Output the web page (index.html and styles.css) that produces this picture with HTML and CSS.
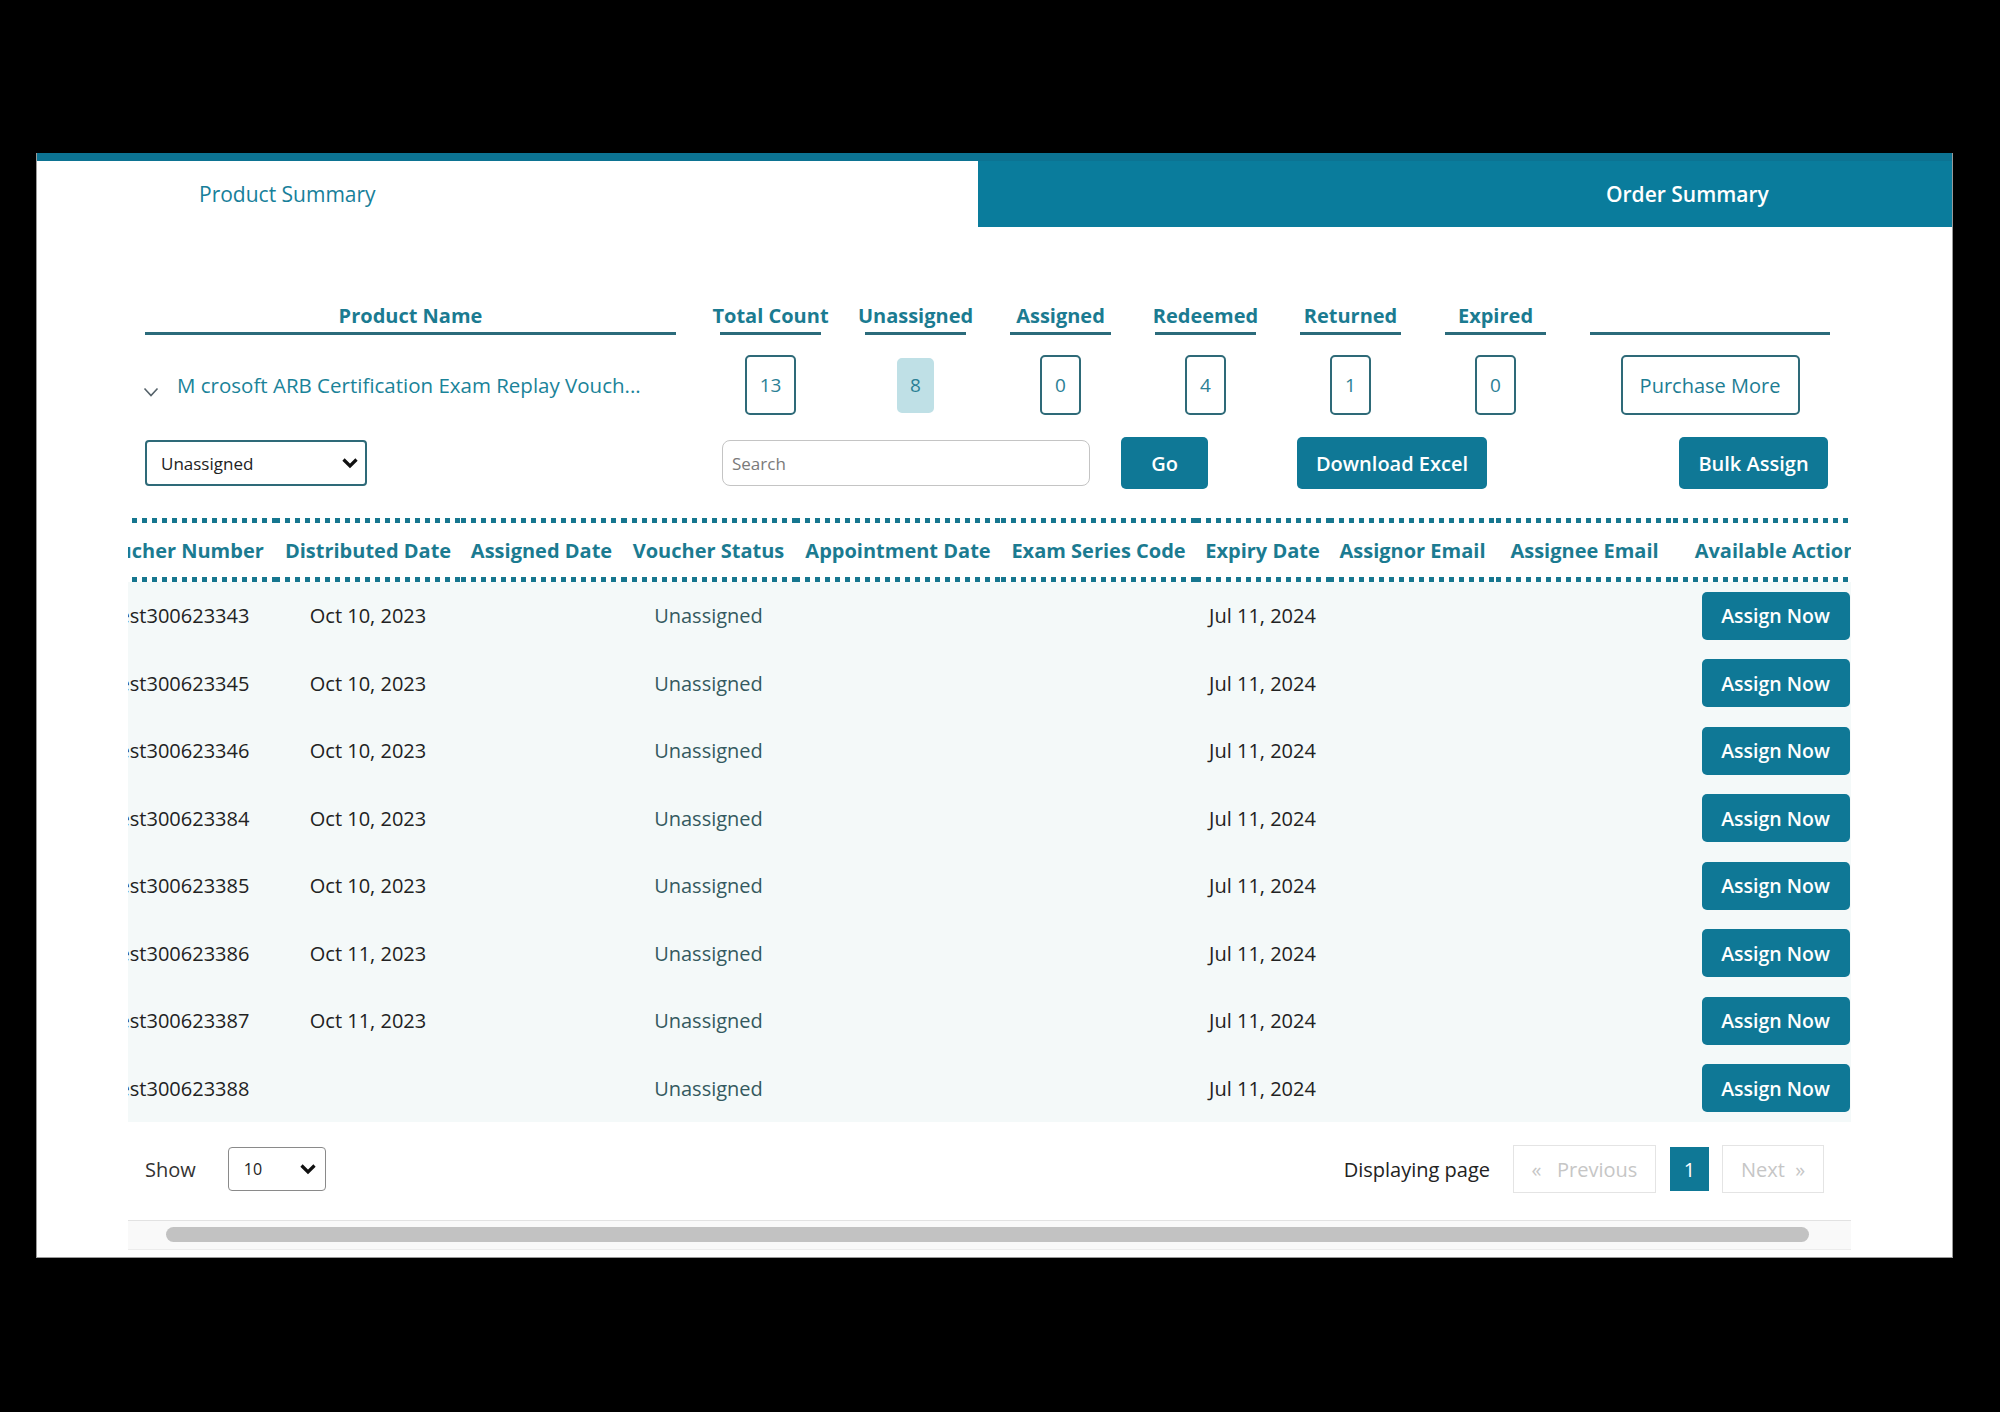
FILE: index.html
```html
<!DOCTYPE html>
<html lang="en">
<head>
<meta charset="UTF-8">
<meta name="viewport" content="width=device-width, initial-scale=1.0">
<title>Voucher Summary</title>
<link rel="stylesheet" href="styles.css">
</head>
<body>

<div class="screen">
<div class="card">

    <div class="tabs">
        <div class="tab tab-product">Product Summary</div>
        <div class="tab tab-order">Order Summary</div>
    </div>

    <div class="summary">
        <div class="summary-grid">
            <div class="sum-head">Product Name</div>
            <div class="sum-head">Total Count</div>
            <div class="sum-head">Unassigned</div>
            <div class="sum-head">Assigned</div>
            <div class="sum-head">Redeemed</div>
            <div class="sum-head">Returned</div>
            <div class="sum-head">Expired</div>
            <div class="sum-head"></div>

            <div class="product-cell">
                <svg class="expand" width="16" height="10" viewBox="0 0 16 10"><path d="M1.5 1.5 L8 8.5 L14.5 1.5" fill="none" stroke="#55626a" stroke-width="1.6"/></svg>
                <span class="product-name">M crosoft ARB Certification Exam Replay Vouch...</span>
            </div>
            <div class="count-cell"><span class="count">13</span></div>
            <div class="count-cell"><span class="count count-active">8</span></div>
            <div class="count-cell"><span class="count">0</span></div>
            <div class="count-cell"><span class="count">4</span></div>
            <div class="count-cell"><span class="count">1</span></div>
            <div class="count-cell"><span class="count">0</span></div>
            <div class="count-cell"><button class="btn-outline">Purchase More</button></div>
        </div>

        <div class="controls">
            <div class="select status-select">
                <span>Unassigned</span>
                <svg width="18" height="12" viewBox="0 0 18 12"><path d="M2.5 2.5 L9 9 L15.5 2.5" fill="none" stroke="#111" stroke-width="3.2"/></svg>
            </div>
            <input type="text" class="search" placeholder="Search">
            <button class="btn btn-go">Go</button>
            <button class="btn btn-excel">Download Excel</button>
            <button class="btn btn-bulk">Bulk Assign</button>
        </div>
    </div>

    <div class="voucher-table">
        <div class="table-clip">
            <table>
                <colgroup>
                    <col style="width:193px">
                    <col style="width:186px">
                    <col style="width:161px">
                    <col style="width:173px">
                    <col style="width:206px">
                    <col style="width:195px">
                    <col style="width:133px">
                    <col style="width:167px">
                    <col style="width:177px">
                    <col style="width:205px">
                </colgroup>
                <thead>
                    <tr>
                        <th>Voucher Number</th>
                        <th>Distributed Date</th>
                        <th>Assigned Date</th>
                        <th>Voucher Status</th>
                        <th>Appointment Date</th>
                        <th>Exam Series Code</th>
                        <th>Expiry Date</th>
                        <th>Assignor Email</th>
                        <th>Assignee Email</th>
                        <th>Available Action</th>
                    </tr>
                </thead>
                <tbody>
                    <tr><td>Test300623343</td><td>Oct 10, 2023</td><td></td><td class="status">Unassigned</td><td></td><td></td><td>Jul 11, 2024</td><td></td><td></td><td><button class="btn btn-assign">Assign Now</button></td></tr>
                    <tr><td>Test300623345</td><td>Oct 10, 2023</td><td></td><td class="status">Unassigned</td><td></td><td></td><td>Jul 11, 2024</td><td></td><td></td><td><button class="btn btn-assign">Assign Now</button></td></tr>
                    <tr><td>Test300623346</td><td>Oct 10, 2023</td><td></td><td class="status">Unassigned</td><td></td><td></td><td>Jul 11, 2024</td><td></td><td></td><td><button class="btn btn-assign">Assign Now</button></td></tr>
                    <tr><td>Test300623384</td><td>Oct 10, 2023</td><td></td><td class="status">Unassigned</td><td></td><td></td><td>Jul 11, 2024</td><td></td><td></td><td><button class="btn btn-assign">Assign Now</button></td></tr>
                    <tr><td>Test300623385</td><td>Oct 10, 2023</td><td></td><td class="status">Unassigned</td><td></td><td></td><td>Jul 11, 2024</td><td></td><td></td><td><button class="btn btn-assign">Assign Now</button></td></tr>
                    <tr><td>Test300623386</td><td>Oct 11, 2023</td><td></td><td class="status">Unassigned</td><td></td><td></td><td>Jul 11, 2024</td><td></td><td></td><td><button class="btn btn-assign">Assign Now</button></td></tr>
                    <tr><td>Test300623387</td><td>Oct 11, 2023</td><td></td><td class="status">Unassigned</td><td></td><td></td><td>Jul 11, 2024</td><td></td><td></td><td><button class="btn btn-assign">Assign Now</button></td></tr>
                    <tr><td>Test300623388</td><td></td><td></td><td class="status">Unassigned</td><td></td><td></td><td>Jul 11, 2024</td><td></td><td></td><td><button class="btn btn-assign">Assign Now</button></td></tr>
                </tbody>
            </table>
        </div>

        <div class="table-footer">
            <span class="show-label">Show</span>
            <div class="select page-size">
                <span>10</span>
                <svg width="18" height="12" viewBox="0 0 18 12"><path d="M2.5 2.5 L9 9 L15.5 2.5" fill="none" stroke="#111" stroke-width="3.2"/></svg>
            </div>
            <div class="pager">
                <span class="pager-label">Displaying page</span>
                <span class="page-link page-prev">&laquo;&nbsp;&nbsp; Previous</span>
                <span class="page-link page-current">1</span>
                <span class="page-link page-next">Next &nbsp;&raquo;</span>
            </div>
        </div>

        <div class="scrollbar"><div class="thumb"></div></div>
    </div>

</div>
</div>

</body>
</html>
```

FILE: styles.css
```css
* {
    box-sizing: border-box;
}

body {
    font-family: "Open Sans", "Liberation Sans", sans-serif;
    background: #000;
    color: #222;
    margin: 0;
    padding: 0;
}

.screen {
    padding: 153px 0 0 36px;
    height: 1412px;
}

.card {
    width: 1917px;
    background: #fff;
    border: 1px solid #9a9a9a;
    border-top: none;
    padding-bottom: 7px;
}

/* tabs */

.tabs {
    display: flex;
    border-top: 8px solid #0c7392;
    height: 74px;
}

.tab {
    display: flex;
    align-items: center;
    font-size: 21px;
}

.tab-product {
    width: 941px;
    padding-left: 162px;
    color: #17809a;
}

.tab-order {
    flex: 1;
    background: #0a7c9c;
    color: #fff;
    font-weight: 600;
    padding-left: 628px;
}

/* product summary */

.summary {
    padding: 75px 0 0 108px;
}

.summary-grid {
    display: grid;
    grid-template-columns: 531px repeat(6, 101px) 240px;
    column-gap: 44px;
    row-gap: 20px;
    align-items: center;
}

.sum-head {
    display: flex;
    justify-content: center;
    white-space: nowrap;
    height: 33px;
    line-height: 28px;
    font-size: 20px;
    font-weight: 700;
    color: #1b7b91;
    border-bottom: 3px solid #2b6b7b;
}

.product-cell {
    display: flex;
    align-items: center;
    height: 60px;
}

.expand {
    margin: 14px 18px 0 -2px;
}

.product-name {
    font-size: 20.5px;
    color: #1a8399;
    white-space: nowrap;
}

.count-cell {
    display: flex;
    justify-content: center;
}

.count {
    height: 60px;
    line-height: 56px;
    padding: 0 13px;
    border: 2px solid #2e6a78;
    border-radius: 5px;
    font-size: 19px;
    color: #2b8095;
}

.count-active {
    background: #bfe0e6;
    border-color: #bfe0e6;
    height: 55px;
    line-height: 51px;
    padding: 0 11px;
}

.btn-outline {
    height: 60px;
    width: 179px;
    background: #fff;
    border: 2px solid #2e6a78;
    border-radius: 5px;
    font-family: inherit;
    font-size: 20px;
    color: #1d7d93;
}

.controls {
    display: flex;
    align-items: center;
    margin-top: 22px;
    width: 1683px;
}

.select {
    display: flex;
    align-items: center;
    justify-content: space-between;
    background: #fff;
}

.status-select {
    width: 222px;
    height: 46px;
    border: 2px solid #2e6a78;
    border-radius: 4px;
    padding: 0 6px 0 14px;
    font-size: 17px;
    color: #222;
}

.search {
    margin-left: 355px;
    width: 368px;
    height: 46px;
    border: 1px solid #c4c4c4;
    border-radius: 8px;
    padding: 0 9px;
    font-family: inherit;
    font-size: 17px;
    color: #333;
}

.search::placeholder {
    color: #7a7a7a;
}

.btn {
    border: none;
    border-radius: 5px;
    background: #0f7896;
    color: #fff;
    font-family: inherit;
    font-size: 20px;
    font-weight: 600;
    height: 52px;
    padding: 0;
}

.btn-go {
    width: 87px;
    margin-left: 31px;
}

.btn-excel {
    width: 190px;
    margin-left: 89px;
}

.btn-bulk {
    width: 149px;
    margin-left: auto;
}

/* voucher table */

.voucher-table {
    margin: 29px 0 0 91px;
    width: 1723px;
}

.table-clip {
    overflow: hidden;
}

table {
    table-layout: fixed;
    width: 1796px;
    margin-left: -46px;
    border-collapse: collapse;
}

th {
    height: 64px;
    padding: 0;
    white-space: nowrap;
    font-size: 20px;
    font-weight: 700;
    color: #1b7b91;
    background-image:
        repeating-linear-gradient(90deg, #16768f 0 5px, transparent 5px 10px),
        repeating-linear-gradient(90deg, #16768f 0 5px, transparent 5px 10px);
    background-size: 100% 5px, 100% 5px;
    background-position: left top, left bottom;
    background-repeat: no-repeat;
}

td {
    height: 67.5px;
    padding: 0;
    text-align: center;
    white-space: nowrap;
    font-size: 20px;
    color: #222;
    background: #f4f9f9;
}

td.status {
    color: #345a5f;
}

.btn-assign {
    width: 148px;
    height: 48px;
    font-weight: 600;
    font-size: 19.5px;
}

.table-footer {
    display: flex;
    align-items: center;
    padding: 23px 27px 27px 17px;
    height: 98px;
}

.show-label {
    font-size: 20px;
    color: #333;
}

.page-size {
    margin-left: 32px;
    width: 98px;
    height: 44px;
    border: 1px solid #8a8a8a;
    border-radius: 4px;
    padding: 0 8px 0 15px;
    font-size: 16px;
}

.pager {
    margin-left: auto;
    display: flex;
    align-items: center;
}

.pager-label {
    font-size: 20px;
    color: #222;
    margin-right: 23px;
}

.page-link {
    display: flex;
    align-items: center;
    justify-content: center;
    height: 48px;
    border: 1px solid #e4e4e4;
    font-size: 20px;
    color: #c6c6c6;
}

.page-prev {
    width: 143px;
}

.page-current {
    width: 39px;
    height: 44px;
    margin: 0 13px 0 14px;
    background: #0f7896;
    border-color: #0f7896;
    color: #fff;
}

.page-next {
    width: 102px;
}

.scrollbar {
    height: 30px;
    background: #f9f9f9;
    border-top: 1px solid #e2e2e2;
    border-bottom: 1px solid #ececec;
    padding: 6px 42px 0 38px;
}

.thumb {
    height: 15px;
    border-radius: 8px;
    background: #c2c2c2;
}
```
